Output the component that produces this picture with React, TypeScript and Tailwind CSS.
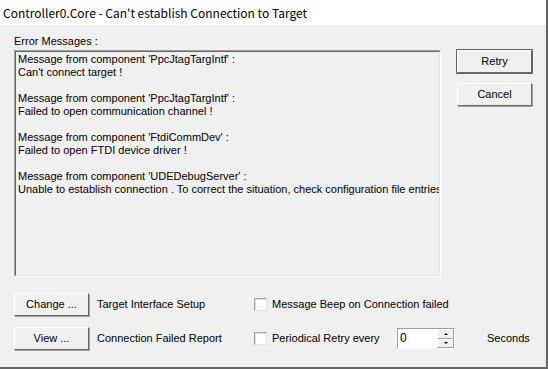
import React from 'react';

const lines = [
  "Message from component 'PpcJtagTargIntf' :",
  "Can't connect target !",
  '',
  "Message from component 'PpcJtagTargIntf' :",
  'Failed to open communication channel !',
  '',
  "Message from component 'FtdiCommDev' :",
  'Failed to open FTDI device driver !',
  '',
  "Message from component 'UDEDebugServer' :",
  'Unable to establish connection . To correct the situation, check configuration file entries and connections.',
];

function Btn({ label, primary }: { label: string; primary?: boolean }) {
  return (
    <button
      className={
        'w-[75px] h-[23px] bg-[#f0f0f0] text-[11px] text-black border border-t-white border-l-white border-r-[#696969] border-b-[#696969] ' +
        (primary ? 'outline outline-1 outline-[#646464]' : 'shadow-[1px_1px_0_#a0a0a0]')
      }
    >
      {label}
    </button>
  );
}

function Check({ label }: { label: string }) {
  return (
    <label className="flex items-center">
      <span className="w-[13px] h-[13px] bg-white border border-t-[#a0a0a0] border-l-[#a0a0a0] border-r-[#e3e3e3] border-b-[#e3e3e3] shadow-[inset_1px_1px_0_#e0e0e0]" />
      <span className="ml-[5px]">{label}</span>
    </label>
  );
}

export default function App() {
  return (
    <div
      className="w-[548px] h-[369px] bg-[#f0f0f0] border-r-2 border-b-2 border-[#646464] text-[11px] text-black flex flex-col"
      style={{ fontFamily: '"Liberation Sans", Arial, sans-serif' }}
    >
      {/* Title bar */}
      <div
        className="h-[25px] bg-white flex items-center pl-[3px] text-[12px]"
        style={{ fontFamily: '"Noto Sans CJK SC", "Noto Sans", sans-serif' }}
      >
        Controller0.Core - Can't establish Connection to Target
      </div>

      <div className="flex-1 px-[14px] pt-[10px]">
        <div className="leading-[13px]">Error Messages :</div>

        <div className="flex mt-[2px]">
          {/* Message box */}
          <div className="w-[427px] h-[227px] border border-t-[#a0a0a0] border-l-[#a0a0a0] border-r-white border-b-white">
            <div className="w-full h-full border border-t-[#696969] border-l-[#696969] border-r-[#e3e3e3] border-b-[#e3e3e3] overflow-hidden pl-[2px] pt-[1px]">
              {lines.map((l, i) => (
                <div key={i} className="h-[13px] leading-[13px] whitespace-nowrap">
                  {l}
                </div>
              ))}
            </div>
          </div>

          <div className="ml-[16px] flex flex-col gap-[10px]">
            <Btn label="Retry" primary />
            <Btn label="Cancel" />
          </div>
        </div>

        {/* Bottom rows */}
        <div className="mt-[16px] flex flex-col gap-[11px]">
          <div className="flex items-center h-[23px]">
            <Btn label="Change ..." />
            <span className="ml-[8px] w-[157px]">Target Interface Setup</span>
            <Check label="Message Beep on Connection failed" />
          </div>
          <div className="flex items-center h-[23px]">
            <Btn label="View ..." />
            <span className="ml-[8px] w-[157px]">Connection Failed Report</span>
            <div className="w-[143px]">
              <Check label="Periodical Retry every" />
            </div>
            <div className="w-[58px] h-[21px] bg-white border border-t-[#a0a0a0] border-l-[#a0a0a0] border-r-white border-b-white flex">
              <span className="flex-1 pl-[2px] leading-[19px] text-[12px]">0</span>
              <div className="w-[17px] flex flex-col">
                <div className="flex-1 bg-[#f0f0f0] border border-t-white border-l-white border-r-[#a0a0a0] border-b-[#a0a0a0] flex items-center justify-center">
                  <span className="w-0 h-0 border-l-[2px] border-r-[2px] border-b-[2px] border-l-transparent border-r-transparent border-b-black" />
                </div>
                <div className="flex-1 bg-[#f0f0f0] border border-t-white border-l-white border-r-[#a0a0a0] border-b-[#a0a0a0] flex items-center justify-center">
                  <span className="w-0 h-0 border-l-[2px] border-r-[2px] border-t-[2px] border-l-transparent border-r-transparent border-t-black" />
                </div>
              </div>
            </div>
            <span className="ml-[32px]">Seconds</span>
          </div>
        </div>
      </div>
    </div>
  );
}
